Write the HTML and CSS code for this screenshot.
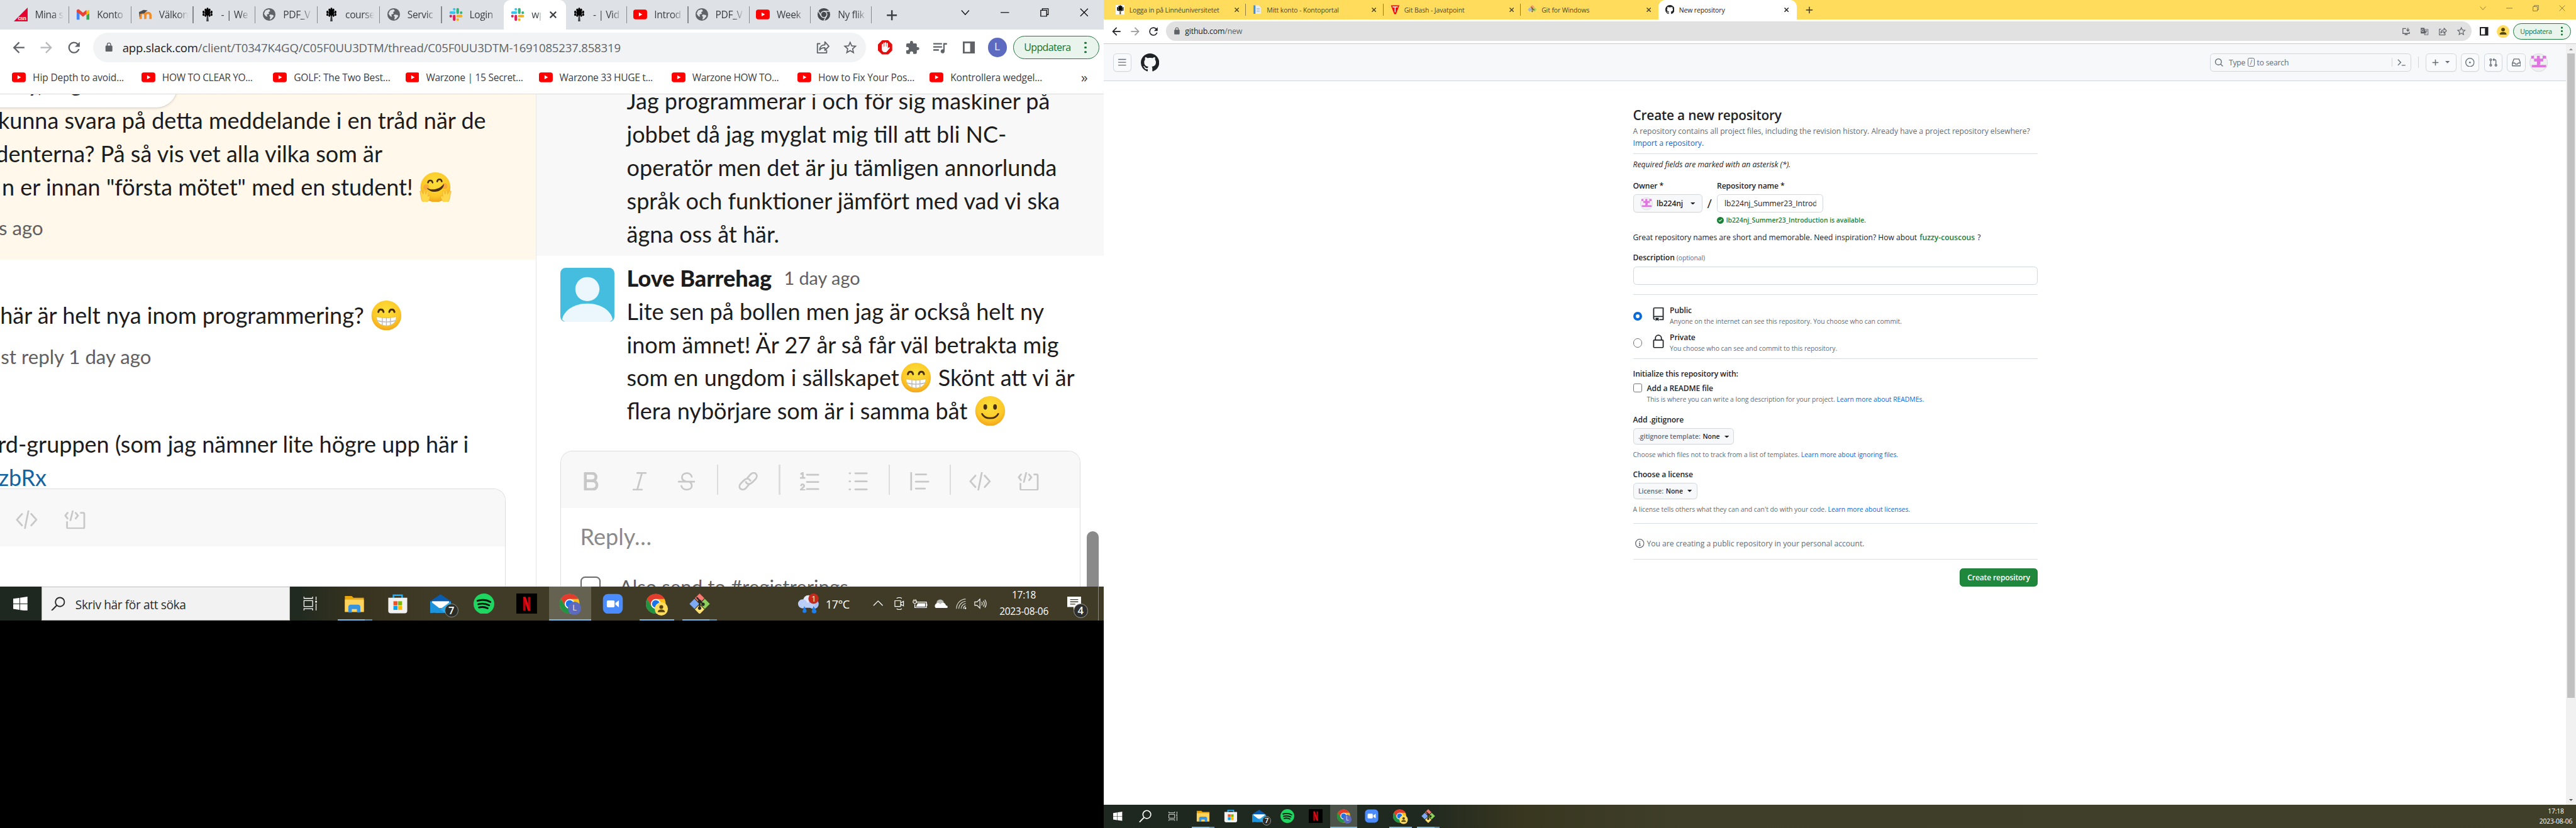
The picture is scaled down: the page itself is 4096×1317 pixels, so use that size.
FILE: index.html
```html
<!DOCTYPE html>
<html lang="sv">
<head>
<meta charset="utf-8">
<title>Desktop</title>
<link rel="stylesheet" href="styles.css">
</head>
<body>
<svg class="defs" aria-hidden="true">
  <symbol id="csn" viewBox="0 0 24 24"><path d="M24 0v24H0z" fill="#e4032e"/><text x="7" y="22" font-size="9" font-weight="700" font-family="Liberation Sans, sans-serif" fill="#fff">csn</text></symbol>
  <symbol id="gmail" viewBox="0 0 24 24"><path d="M1 4v17h5V11z" fill="#4285f4"/><path d="M23 4v17h-5V11z" fill="#34a853"/><path d="M18 6l5-2v6l-5 4z" fill="#fbbc04"/><path d="M1 6c0-3 3-4 5-2l6 5 6-5v7l-6 5-6-5-5-3z" fill="#ea4335"/></symbol>
  <symbol id="moodle" viewBox="0 0 24 24"><path d="M4 20v-7c0-5 7-5 8 0v7m0-7c1-5 9-5 9 0v7" fill="none" stroke="#f28c28" stroke-width="4"/><path d="M1 8l8-4 7 1-6 5-7 1v5H2z" fill="#4d4d4d"/></symbol>
  <symbol id="tree" viewBox="0 0 24 24"><path d="M11 12h2l1 12h-4z"/><g fill="none" stroke="#000" stroke-width="3.2" stroke-linecap="round" stroke-dasharray="1.500 3.300"><path d="M12 2v12M8.500 3.500v11M15.500 3.500v11M5 7v6M19 7v6M10.300 5.500v9M13.700 5.500v9"/></g></symbol>
  <symbol id="globe" viewBox="0 0 24 24"><circle cx="12" cy="12" r="11" fill="#5f6368"/><path d="M5 6c3-3 6-2 7-3l2 3-3 2 1 3-4 1 1 4-3-1-3-4zM14 12l5 1 1 2-4 5-3 1 1-5-2-2z" fill="#dee1e6"/></symbol>
  <symbol id="slack" viewBox="0 0 24 24"><g stroke-width="4.6" stroke-linecap="round"><path d="M9 3v.1M3 9h6" stroke="#36c5f0"/><path d="M15 3v6M21 9v.1" stroke="#2eb67d"/><path d="M15 15h6M15 21v.1" stroke="#ecb22e"/><path d="M9 15v6M3 15v.1" stroke="#e01e5a"/></g></symbol>
  <symbol id="yt" viewBox="0 0 24 24"><rect y="3.5" width="24" height="17" rx="4" fill="#f00"/><path d="M9.7 8.6v6.8l6-3.4z" fill="#fff"/></symbol>
  <symbol id="chromegrey" viewBox="0 0 24 24"><circle cx="12" cy="12" r="11" fill="#474a4e"/><circle cx="12" cy="12" r="5.4" fill="none" stroke="#dee1e6" stroke-width="1.6"/><path d="M12 6.6h10M7.3 14.7L2.4 6.5M16.7 14.7L12 23" stroke="#dee1e6" stroke-width="1.6"/></symbol>
  <symbol id="portal" viewBox="0 0 24 24"><path d="M3 1h13l5 6v16H3z" fill="#e8eef5"/><path d="M2 1h5v22H2z" fill="#3f8fd6"/><path d="M10 9h8M10 13h8M10 17h8" stroke="#9fb4c8" stroke-width="1.6"/></symbol>
  <symbol id="jtp" viewBox="0 0 24 24"><path d="M1 1h22l-9 23h-4z" fill="#f00"/><path d="M5 5h14M12 5v14" stroke="#fff" stroke-width="2.4"/></symbol>
  <symbol id="git" viewBox="0 0 24 24"><path d="M12 0l5.5 5.5L12 11 6.500 5.500z" fill="#f47b73"/><path d="M6 6.200l5.500 5.800L6 17.800.2 12z" fill="#7ea9f5"/><path d="M18 6.200l5.800 5.800-5.800 5.800-5.500-5.800z" fill="#8bd15c"/><path d="M12 13l5.500 5.500L12 24l-5.500-5.500z" fill="#ffe175"/><path d="M8.500 4.500l7.500 8M12 8v8.500" stroke="#2b2a22" stroke-width="1.700"/><circle cx="12" cy="9" r="1.900" fill="#2b2a22"/><circle cx="16" cy="12.500" r="1.900" fill="#2b2a22"/><circle cx="12" cy="17" r="1.900" fill="#2b2a22"/></symbol>
  <symbol id="gh" viewBox="0 0 16 16"><path d="M8 0c4.420 0 8 3.580 8 8a8.013 8.013 0 0 1-5.450 7.590c-.4.080-.55-.17-.55-.38 0-.27.010-1.130.010-2.200 0-.75-.25-1.230-.54-1.480 1.780-.2 3.650-.88 3.650-3.950 0-.88-.31-1.590-.82-2.150.080-.2.360-1.020-.080-2.120 0 0-.67-.22-2.200.82-.64-.18-1.320-.27-2-.27-.68 0-1.360.090-2 .27-1.530-1.030-2.200-.82-2.200-.82-.44 1.100-.16 1.920-.080 2.120-.51.56-.82 1.280-.82 2.150 0 3.060 1.860 3.750 3.640 3.950-.23.2-.44.550-.51 1.070-.46.210-1.610.550-2.330-.66-.15-.24-.6-.83-1.230-.82-.67.010-.27.380.010.530.34.190.73.900.82 1.130.16.450.68 1.310 2.690.94 0 .67.010 1.300.010 1.490 0 .21-.15.450-.55.380A7.995 7.995 0 0 1 0 8c0-4.420 3.580-8 8-8Z"/></symbol>
  <symbol id="back" viewBox="0 0 24 24"><path d="M20 11H7.800l5.600-5.600L12 4l-8 8 8 8 1.400-1.400L7.800 13H20z"/></symbol>
  <symbol id="fwd" viewBox="0 0 24 24"><path d="M4 11h12.200l-5.600-5.600L12 4l8 8-8 8-1.400-1.400 5.600-5.600H4z"/></symbol>
  <symbol id="reload" viewBox="0 0 24 24"><path d="M17.650 6.350A7.960 7.960 0 0 0 12 4a8 8 0 1 0 7.730 10h-2.080A6 6 0 1 1 12 6c1.660 0 3.140.69 4.220 1.780L13 11h7V4z"/></symbol>
  <symbol id="lock" viewBox="0 0 24 24"><path d="M18 8h-1V6A5 5 0 0 0 7 6v2H6a2 2 0 0 0-2 2v10c0 1.100.9 2 2 2h12a2 2 0 0 0 2-2V10a2 2 0 0 0-2-2zM9 6a3 3 0 0 1 6 0v2H9z"/></symbol>
  <symbol id="share" viewBox="0 0 24 24"><path d="M8 6H3v16h16v-5M7 17c0-6 4-9 9-9V3l7 7.500-7 7V13c-4 0-7 1-9 4z" fill="none" stroke="currentColor" stroke-width="2" stroke-linejoin="round"/></symbol>
  <symbol id="star" viewBox="0 0 24 24"><path d="M22 9.240l-7.190-.62L12 2 9.190 8.630 2 9.240l5.460 4.730L5.820 21 12 17.270 18.180 21l-1.630-7.030zM12 15.400l-3.760 2.270 1-4.280-3.320-2.880 4.380-.38L12 6.100l1.710 4.040 4.380.38-3.320 2.880 1 4.280z"/></symbol>
  <symbol id="hand" viewBox="0 0 24 24"><path d="M7 0h10l7 7v10l-7 7H7l-7-7V7z" fill="#e40d0d"/><path d="M6.500 12V7a1 1 0 0 1 2 0v4h.5V5a1 1 0 0 1 2.100 0v5.500h.6V4.200a1 1 0 0 1 2.100 0v6.300h.6V5.500a1 1 0 0 1 2.100 0v8l1.500-1.500c1-1 2.500 0 1.500 1.500L15.500 18c-1 1.500-2 2-4 2-3 0-5-2-5-5z" fill="#fff"/></symbol>
  <symbol id="puzzle" viewBox="0 0 24 24"><path d="M20.500 11H19V7a2 2 0 0 0-2-2h-4V3.500a2.500 2.500 0 0 0-5 0V5H4a2 2 0 0 0-2 2v3.800h1.500a2.700 2.700 0 0 1 0 5.400H2V20c0 1.100.9 2 2 2h3.800v-1.500a2.700 2.700 0 0 1 5.400 0V22H17a2 2 0 0 0 2-2v-4h1.500a2.500 2.500 0 0 0 0-5z"/></symbol>
  <symbol id="queue" viewBox="0 0 24 24"><path d="M15 4.500H1v2.400h14zm0 5H1v2.400h14zM1 16.900h9v-2.400H1zM17 4.500v10.200a3.200 3.200 0 1 0 2.200 3V7H23V4.500z"/></symbol>
  <symbol id="panel" viewBox="0 0 24 24"><path d="M0 0h24v24H0zm3.500 3.500v17h11v-17z" fill-rule="evenodd"/></symbol>
  <symbol id="install" viewBox="0 0 24 24"><path d="M12 4H3v14h18v-5M8 21h8M17 2v9m-4-4l4 4.500L21 7" fill="none" stroke="currentColor" stroke-width="2.300"/></symbol>
  <symbol id="translate" viewBox="0 0 24 24"><path d="M2 2h10l4 16H2z"/><path d="M13 6.500h9.500v15H12l2-3.500M14 11h7m-3.500-2v2c0 3-2 5-3.500 6m1-5c1 3 3 4.500 5 5.500" fill="none" stroke="currentColor" stroke-width="1.600"/><path d="M9.500 7.500A3.200 3.200 0 1 0 10 11H7.500" fill="none" stroke="#e1e1e1" stroke-width="1.500"/></symbol>
  <symbol id="person" viewBox="0 0 24 24"><circle cx="12" cy="12" r="12" fill="#ffdc5c"/><circle cx="12" cy="8.500" r="3.500" fill="#54430a"/><path d="M5.500 18c0-4 3-5 6.500-5s6.500 1 6.500 5z" fill="#54430a"/></symbol>
  <symbol id="x" viewBox="0 0 16 16"><path d="M1 1l14 14M15 1L1 15" stroke="currentColor" fill="none" vector-effect="non-scaling-stroke"/></symbol>
  <symbol id="chev" viewBox="0 0 16 16"><path d="M1 4l7 8 7-8" stroke="currentColor" fill="none" vector-effect="non-scaling-stroke"/></symbol>
  <symbol id="min" viewBox="0 0 16 16"><path d="M0 8h16" stroke="currentColor" vector-effect="non-scaling-stroke"/></symbol>
  <symbol id="restore" viewBox="0 0 16 16"><path d="M1 4h11v11H1zM4 4V1h11v11h-3" stroke="currentColor" fill="none" vector-effect="non-scaling-stroke"/></symbol>
  <symbol id="plus" viewBox="0 0 16 16"><path d="M8 1v14M1 8h14" stroke="currentColor" stroke-width="2.200"/></symbol>

  <radialGradient id="face" cx=".5" cy=".35" r=".65"><stop offset="0" stop-color="#fde13b"/><stop offset=".7" stop-color="#fcc727"/><stop offset="1" stop-color="#f3a41d"/></radialGradient>
  <symbol id="grin" viewBox="0 0 52 52"><circle cx="26" cy="26" r="26" fill="url(#face)"/><path d="M12 20c1-6 8-6 9 0M31 20c1-6 8-6 9 0" fill="none" stroke="#4a2f12" stroke-width="3.200" stroke-linecap="round"/><path d="M9 28c10 3 24 3 34 0 1 9-6 16-17 16S8 37 9 28z" fill="#fff" stroke="#d9b24a" stroke-width=".8"/><path d="M10 35c10 3 22 3 32 0M19 30v13M26 30v14M33 30v13" stroke="#b9b9b9" stroke-width="1.500" fill="none"/></symbol>
  <symbol id="smile" viewBox="0 0 52 52"><circle cx="26" cy="26" r="26" fill="url(#face)"/><ellipse cx="17.500" cy="19" rx="3.200" ry="4.800" fill="#4a2f12"/><ellipse cx="34.500" cy="19" rx="3.200" ry="4.800" fill="#4a2f12"/><path d="M12 31c5 10 23 10 28 0" fill="none" stroke="#4a2f12" stroke-width="3" stroke-linecap="round"/></symbol>
  <symbol id="hug" viewBox="0 0 56 52"><circle cx="28" cy="26" r="26" fill="url(#face)"/><circle cx="12" cy="26" r="5" fill="#f58a4b" opacity=".5"/><circle cx="44" cy="24" r="5" fill="#f58a4b" opacity=".5"/><path d="M15 18c1-5 7-5 8 0M31 16c1-5 7-5 8 0" fill="none" stroke="#4a2f12" stroke-width="2.800" stroke-linecap="round"/><path d="M13 27c8 5 21 4 30-7-1 16-24 18-30 7z" fill="#4a2f12"/><path d="M2 38l-1-5 2-1 4 6 0-7 2 0 2 7 3-6 2 1-1 9 3-2c2 3-1 12-8 13C4 53 3 45 2 38zM54 38l1-5-2-1-4 6 0-7-2 0-2 7-3-6-2 1 1 9-3-2c-2 3 1 12 8 13 6 0 7-8 8-15z" fill="#ffd84a" stroke="#f2a93b" stroke-width=".8"/></symbol>

  <symbol id="code" viewBox="0 0 38 32"><path d="M11 6L2 16l9 10M27 6l9 10-9 10M22 1l-6 30" class="ln"/></symbol>
  <symbol id="codeblock" viewBox="0 0 38 32"><path d="M6 4L2 9l4 5M20 4l4 5-4 5M15 1l-4 16M5 20v9q0 2 2 2h26q2 0 2-2V6q0-2-2-2h-4" class="ln"/></symbol>
  <symbol id="bold" viewBox="0 0 26 32"><path d="M3 2h11c10 0 10 13 0 13H3zM3 15h12c11 0 11 15 0 15H3z" class="ln bd"/></symbol>
  <symbol id="ital" viewBox="0 0 24 32"><path d="M8 1.500h15M1 30.500h15M16 2L8 30" class="ln"/></symbol>
  <symbol id="strike" viewBox="0 0 30 32"><path d="M1 16.500h28M24 8C22-1 7 0 7 9c0 4 3 6 6 7M6 24c2 9 18 8 18 0 0-4-2-6-4-7" class="ln"/></symbol>
  <symbol id="link" viewBox="0 0 34 32"><path d="M15 11l6-7c7-7 15 1 9 8l-6 6c-4 4-9 3-11-1M19 21l-6 7C6 34-2 27 4 20l6-6c4-4 9-3 11 1" class="ln"/></symbol>
  <symbol id="ol" viewBox="0 0 34 32"><path d="M12 4.500h20M12 17h20M12 29.500h20M2 3l3-2v9M1 10h7M2 23c2-4 6-1 5 2l-6 6h7" class="ln"/></symbol>
  <symbol id="ul" viewBox="0 0 34 32"><path d="M12 2h20M12 16h20M12 30h20M2 2h1M2 16h1M2 30h1" class="ln"/></symbol>
  <symbol id="quote" viewBox="0 0 34 32"><path d="M2 1v30M10 4h18M10 16.500h22M10 28.500h16" class="ln"/></symbol>

  <symbol id="win" viewBox="0 0 24 24"><path d="M0 3.500l10.500-1.500v9.500H0zM11.500 1.800L24 0v11.500H11.500zM0 12.500h10.500V22L0 20.500zM11.500 12.500H24V24l-12.500-1.800z" fill="#fff"/></symbol>
  <symbol id="mag" viewBox="0 0 24 24"><circle cx="15" cy="9" r="7.500" fill="none" stroke="currentColor" stroke-width="2"/><path d="M9.800 14.500L1 23.500" stroke="currentColor" stroke-width="2.200"/></symbol>
  <symbol id="tview" viewBox="0 0 24 24"><path d="M1 0v3h15V0M1 7h15v10H1zM1 24v-3h15v3M22 0v6M22 12v12" fill="none" stroke="#fff" stroke-width="1.400"/><path d="M20.500 7.500h3v3h-3z" fill="#fff"/></symbol>
  <symbol id="expl" viewBox="0 0 24 24"><path d="M1 4.500V3h8l2 2h12v16H1z" fill="#e8a50d"/><path d="M1 7h22v14.500H1z" fill="#ffd35c"/><path d="M5 22v-6c0-2 1-3 3-3h8c2 0 3 1 3 3v6h-4v-4H9v4z" fill="#3a93dd"/></symbol>
  <symbol id="store" viewBox="0 0 24 24"><path d="M7 6V2h10v4" fill="none" stroke="#29abf0" stroke-width="1.800"/><path d="M1 5h22v15q0 3-3 3H4q-3 0-3-3z" fill="#f1f1f1"/><path d="M7 9h4.700v4.700H7z" fill="#f25022"/><path d="M12.300 9H17v4.700h-4.700z" fill="#7fba00"/><path d="M7 14.300h4.700V19H7z" fill="#00a4ef"/><path d="M12.300 14.300H17V19h-4.700z" fill="#ffb900"/></symbol>
  <symbol id="mail" viewBox="0 0 24 24"><path d="M0 9l12-8 12 8v12H0z" fill="#0a5cae"/><path d="M2 9h20v8H2z" fill="#fff"/><path d="M0 9l12 9-10 4.500H0zM24 9L6 22.500h18z" fill="#2ea9ea"/><path d="M0 9l17 13.500H0z" fill="#1b93dd"/></symbol>
  <symbol id="spot" viewBox="0 0 24 24"><circle cx="12" cy="12" r="12" fill="#1ed760"/><path d="M4.500 8.500c5-1.500 11-1 15 1.300M5.500 12.500c4-1.200 9-.7 12.500 1.200M6.300 16.200c3.500-1 7-.6 10 1" fill="none" stroke="#10150f" stroke-width="2.100" stroke-linecap="round"/></symbol>
  <symbol id="netf" viewBox="0 0 24 24"><path d="M0 0h24v24H0z" fill="#000"/><path d="M8 4h2.800v16H8zM13.500 4h2.800v16h-2.800z" fill="#b1060f"/><path d="M8 4h2.800l5.500 16h-2.800z" fill="#e50914"/></symbol>
  <symbol id="chrome" viewBox="0 0 24 24"><circle cx="11.500" cy="12" r="11.500" fill="#fbc116"/><path d="M1.500 6.200A11.500 11.500 0 0 1 21.500 6.300H11.500L6.500 15z" fill="#e33b2e"/><path d="M1.500 6.200A11.500 11.500 0 0 0 11.500 23.500l5-8.700-5 2.800L6.500 15z" fill="#229342"/><circle cx="11.500" cy="12" r="5.700" fill="#fff"/><circle cx="11.500" cy="12" r="4.400" fill="#1a73e8"/></symbol>
  <symbol id="zoomapp" viewBox="0 0 24 24"><rect x=".5" y=".5" width="23" height="23" rx="6" fill="#4a8cff"/><rect x="5" y="8" width="9" height="8" rx="1.500" fill="#fff"/><path d="M15 11l4-3v8l-4-3z" fill="#fff"/></symbol>
  <symbol id="weather" viewBox="0 0 38 36"><circle cx="19" cy="12" r="9" fill="#dfe8fb"/><circle cx="9" cy="18" r="8" fill="#b9cdf6"/><circle cx="28" cy="18" r="9" fill="#a9c2f4"/><path d="M8 16h22v9H8z" fill="#bccff6"/><path d="M12 22l4 8c0 5-8 5-7 0zM28 22l5 8c1 6-9 6-8 0z" fill="#1b7ff0"/><circle cx="28" cy="9" r="9" fill="#c42b1c"/></symbol>
  <symbol id="meet" viewBox="0 0 18 22"><path d="M1 6h10v10H1zM11 10l5-3v8l-5-3M4 2q5-3 9 0M4 20q5 3 9 0" fill="none" stroke="#fff" stroke-width="1.300"/></symbol>
  <symbol id="batt" viewBox="0 0 26 16"><path d="M6 5h18v10H4V9M25 8v4" fill="none" stroke="#fff" stroke-width="1.500"/><path d="M9 7h13v6H6z" fill="#fff"/><path d="M1 3h6v3q-3 3-6 0zM2.500 0v3M5.500 0v3" stroke="#fff" fill="none" stroke-width="1.200"/></symbol>
  <symbol id="cloud" viewBox="0 0 26 16"><circle cx="12" cy="7" r="6.500" fill="#b9b9b3"/><path d="M5 16a5 5 0 0 1 1-9c3-1 5 0 6 2 2-4 9-4 10 2 4 0 4 5 0 5z" fill="#fff"/></symbol>
  <symbol id="wifi" viewBox="0 0 20 20"><path d="M2 19C2 9 10 2 18 2M6 19c0-7 6-13 12-13M10 19c0-5 4-9 8-9" fill="none" stroke="#d8d8d0" stroke-width="1.300"/><path d="M14 19c0-3 2-5 4-5" fill="none" stroke="#fff" stroke-width="1.300"/><circle cx="17.500" cy="18" r="1.500" fill="#fff"/></symbol>
  <symbol id="sound" viewBox="0 0 22 20"><path d="M1 7h4l5-5v16l-5-5H1zM13 7q2 3 0 6M16 5q3.500 5 0 10M18.500 3q5 7 0 14" fill="none" stroke="#fff" stroke-width="1.200"/></symbol>
  <symbol id="note" viewBox="0 0 24 24"><path d="M0 0h24v18h-8l-5 5v-5H0z" fill="#fff"/><path d="M5 5h14M5 9h14M5 13h9" stroke="#3f3b27" stroke-width="1.500"/></symbol>

  <symbol id="oct-search" viewBox="0 0 16 16"><path d="M10.680 11.740a6 6 0 0 1-7.922-8.982 6 6 0 0 1 8.982 7.922l3.040 3.040a.749.749 0 1 1-1.060 1.060ZM11.500 7a4.499 4.499 0 1 0-8.997 0A4.499 4.499 0 0 0 11.500 7Z"/></symbol>
  <symbol id="oct-bars" viewBox="0 0 16 16"><path d="M1 2.750A.75.750 0 0 1 1.750 2h12.500a.75.750 0 0 1 0 1.500H1.750A.75.750 0 0 1 1 2.750Zm0 5A.75.750 0 0 1 1.750 7h12.500a.75.750 0 0 1 0 1.500H1.750A.75.750 0 0 1 1 7.750ZM1.750 12h12.500a.75.750 0 0 1 0 1.500H1.750a.75.750 0 0 1 0-1.500Z"/></symbol>
  <symbol id="oct-term" viewBox="0 0 16 16"><path d="M2 3l5 5-5 5M8.500 13H15" fill="none" stroke="currentColor" stroke-width="1.500"/></symbol>
  <symbol id="oct-issue" viewBox="0 0 16 16"><circle cx="8" cy="8" r="7.250" fill="none" stroke="currentColor" stroke-width="1.500"/><circle cx="8" cy="8" r="1.500"/></symbol>
  <symbol id="oct-pr" viewBox="0 0 16 16"><path d="M1.500 3.250a2.250 2.250 0 1 1 3 2.122v5.256a2.251 2.251 0 1 1-1.500 0V5.372A2.250 2.250 0 0 1 1.500 3.250Zm5.677-.177L9.573.677A.25.250 0 0 1 10 .854V2.500h1A2.500 2.500 0 0 1 13.500 5v5.628a2.251 2.251 0 1 1-1.500 0V5a1 1 0 0 0-1-1h-1v1.646a.25.250 0 0 1-.427.177L7.177 3.427a.25.250 0 0 1 0-.354ZM3.750 2.500a.75.750 0 1 0 0 1.500.75.750 0 0 0 0-1.500Zm0 9.500a.75.750 0 1 0 0 1.500.75.750 0 0 0 0-1.500Zm8.250.75a.75.750 0 1 0 1.500 0 .75.750 0 0 0-1.500 0Z"/></symbol>
  <symbol id="oct-inbox" viewBox="0 0 16 16"><path d="M3.700 2h8.600l2.900 7.500V13q0 1-1 1H1.800q-1 0-1-1V9.500zM1 9h4l1.300 2h3.400L11 9h4" fill="none" stroke="currentColor" stroke-width="1.500" stroke-linejoin="round"/></symbol>
  <symbol id="caret" viewBox="0 0 8 4"><path d="M0 0h8L4 4z"/></symbol>
  <symbol id="oct-check" viewBox="0 0 16 16"><path d="M8 16A8 8 0 1 1 8 0a8 8 0 0 1 0 16Zm3.780-9.720a.751.751 0 0 0-1.060-1.060L6.750 9.190 5.280 7.720a.751.751 0 0 0-1.060 1.060l2 2a.75.750 0 0 0 1.060 0Z"/></symbol>
  <symbol id="oct-repo" viewBox="0 0 24 24"><path stroke="currentColor" stroke-width=".4" d="M3 2.750A2.750 2.750 0 0 1 5.750 0h14.500a.75.750 0 0 1 .75.750v20.500a.75.750 0 0 1-.75.750h-6a.75.750 0 0 1 0-1.500h5.250v-4H6A1.500 1.500 0 0 0 4.500 18v.75c0 .716.430 1.334 1.050 1.605a.75.750 0 0 1-.6 1.374A3.251 3.251 0 0 1 3 18.750ZM19.500 1.500H5.750c-.69 0-1.250.56-1.250 1.250v12.651A2.989 2.989 0 0 1 6 15h13.500Z"/><path d="M7 18.250a.25.250 0 0 1 .25-.25h5a.25.250 0 0 1 .25.250v5.010a.25.250 0 0 1-.397.201l-2.206-1.604a.25.250 0 0 0-.294 0L7.397 23.460a.25.250 0 0 1-.397-.2v-5.010Z"/></symbol>
  <symbol id="oct-lock" viewBox="0 0 24 24"><path d="M4.700 9.700h14.600q1 0 1 1v11q0 1-1 1H4.700q-1 0-1-1v-11q0-1 1-1zM6.800 9.500V6.500a5.200 5.200 0 0 1 10.400 0v3" fill="none" stroke="currentColor" stroke-width="1.900"/></symbol>
  <symbol id="oct-info" viewBox="0 0 16 16"><circle cx="8" cy="8" r="7.250" fill="none" stroke="currentColor" stroke-width="1.500"/><path d="M6.500 7.750H8.200v3.500M6.500 11.500h3" fill="none" stroke="currentColor" stroke-width="1.400"/><circle cx="8" cy="5" r="1"/></symbol>
  <symbol id="ident" viewBox="0 0 32 32"><circle cx="16" cy="16" r="15.500" fill="#f0f0f0" stroke="#d0d7de"/><path d="M3 4h5v5H3zM13 4h5v5h5V4h5v5h-4v5h-5v5h-1v1h11v4H4v-4h9v-6H8v-5h5zM24 4h5v5h-5z" fill="#e074e0"/></symbol>
</svg>

<main class="desktop">

  <section class="screen left">
    <header class="tabs">
      <div class="tab"><svg><use href="#csn"/></svg><span>Mina s</span></div>
      <div class="tab"><svg><use href="#gmail"/></svg><span>Konto</span></div>
      <div class="tab"><svg><use href="#moodle"/></svg><span>Välkon</span></div>
      <div class="tab"><svg><use href="#tree"/></svg><span>- | We</span></div>
      <div class="tab"><svg><use href="#globe"/></svg><span>PDF_V</span></div>
      <div class="tab"><svg><use href="#tree"/></svg><span>course</span></div>
      <div class="tab"><svg><use href="#globe"/></svg><span>Servic</span></div>
      <div class="tab last"><svg><use href="#slack"/></svg><span>Login</span></div>
      <div class="tab active"><svg><use href="#slack"/></svg><span>wp</span><svg class="close"><use href="#x"/></svg></div>
      <div class="tab b"><svg><use href="#tree"/></svg><span>- | Vid</span></div>
      <div class="tab b"><svg><use href="#yt"/></svg><span>Introd</span></div>
      <div class="tab b"><svg><use href="#globe"/></svg><span>PDF_V</span></div>
      <div class="tab b"><svg><use href="#yt"/></svg><span>Week</span></div>
      <div class="tab b"><svg><use href="#chromegrey"/></svg><span>Ny flik</span></div>
      <svg class="newtab"><use href="#plus"/></svg>
      <div class="winctl"><svg><use href="#chev"/></svg><svg><use href="#min"/></svg><svg><use href="#restore"/></svg><svg><use href="#x"/></svg></div>
    </header>
    <div class="toolbar">
      <svg class="nav"><use href="#back"/></svg><svg class="nav dim"><use href="#fwd"/></svg><svg class="nav"><use href="#reload"/></svg>
      <div class="url"><svg class="lock"><use href="#lock"/></svg><p><b>app.slack.com</b>/client/T0347K4GQ/C05F0UU3DTM/thread/C05F0UU3DTM-1691085237.858319</p><svg class="u1"><use href="#share"/></svg><svg class="u2"><use href="#star"/></svg></div>
      <svg class="t1"><use href="#hand"/></svg><svg class="t2"><use href="#puzzle"/></svg><svg class="t3"><use href="#queue"/></svg><svg class="t4"><use href="#panel"/></svg>
      <span class="me">L</span>
      <span class="update"><span>Uppdatera</span><i class="dots"></i></span>
    </div>
    <nav class="marks">
      <a class="m1"><svg><use href="#yt"/></svg>Hip Depth to avoid...</a>
      <a class="m2"><svg><use href="#yt"/></svg>HOW TO CLEAR YO...</a>
      <a class="m3"><svg><use href="#yt"/></svg>GOLF: The Two Best...</a>
      <a class="m4"><svg><use href="#yt"/></svg>Warzone | 15 Secret...</a>
      <a class="m5"><svg><use href="#yt"/></svg>Warzone 33 HUGE t...</a>
      <a class="m6"><svg><use href="#yt"/></svg>Warzone HOW TO...</a>
      <a class="m7"><svg><use href="#yt"/></svg>How to Fix Your Pos...</a>
      <a class="m8"><svg><use href="#yt"/></svg>Kontrollera wedgel...</a>
      <span class="more">»</span>
    </nav>
    <div class="slack">
      <div class="channel">
        <div class="datepill">Friday, August 4th</div>
        <div class="feed">
          <article class="cream">
            <p class="line e1">kunna svara på detta meddelande i en tråd när de</p>
            <p class="line e2">denterna? På så vis vet alla vilka som är</p>
            <p class="line e3">n er innan "första mötet" med en student! <svg class="emo"><use href="#hug"/></svg></p>
            <p class="meta e4">s ago</p>
          </article>
          <p class="line e5">här är helt nya inom programmering?<svg class="emo gap"><use href="#grin"/></svg></p>
          <p class="meta e6">ast reply 1 day ago</p>
          <p class="line e7">rd-gruppen (som jag nämner lite högre upp här i</p>
          <p class="line e8"><a>zbRx</a></p>
        </div>
        <div class="composer cut"><div class="tools"><svg><use href="#code"/></svg><svg><use href="#codeblock"/></svg></div></div>
      </div>
      <div class="thread">
        <article class="grey">
          <p class="line">Jag programmerar i och för sig maskiner på</p>
          <p class="line">jobbet då jag myglat mig till att bli NC-</p>
          <p class="line">operatör men det är ju tämligen annorlunda</p>
          <p class="line">språk och funktioner jämfört med vad vi ska</p>
          <p class="line">ägna oss åt här.</p>
        </article>
        <article class="reply">
          <svg class="avatar" viewBox="0 0 94 94"><rect width="94" height="94" rx="9" fill="#44bddf"/><circle cx="47" cy="37" r="21" fill="#ebf7fc"/><path d="M3 90C6 74 24 62 47 62s41 12 44 28l-5 4H8z" fill="#ebf7fc"/></svg>
          <div>
            <p class="line"><b>Love Barrehag</b><time>1 day ago</time></p>
            <p class="line">Lite sen på bollen men jag är också helt ny</p>
            <p class="line">inom ämnet! Är 27 år så får väl betrakta mig</p>
            <p class="line">som en ungdom i sällskapet<svg class="emo"><use href="#grin"/></svg> Skönt att vi är</p>
            <p class="line">flera nybörjare som är i samma båt <svg class="emo"><use href="#smile"/></svg></p>
          </div>
        </article>
        <div class="composer">
          <div class="tools">
            <svg class="c1"><use href="#bold"/></svg><svg class="c2"><use href="#ital"/></svg><svg class="c3"><use href="#strike"/></svg><i class="s1"></i>
            <svg class="c4"><use href="#link"/></svg><i class="s2"></i><svg class="c5"><use href="#ol"/></svg><svg class="c6"><use href="#ul"/></svg><i class="s3"></i>
            <svg class="c7"><use href="#quote"/></svg><i class="s4"></i><svg class="c8"><use href="#code"/></svg><svg class="c9"><use href="#codeblock"/></svg>
          </div>
          <p class="ph">Reply…</p>
          <p class="also"><i></i>Also send to #registrerings</p>
        </div>
        <div class="thumb"></div>
      </div>
    </div>
    <footer class="taskbar">
      <svg class="start"><use href="#win"/></svg>
      <div class="search"><svg><use href="#mag"/></svg>Skriv här för att söka</div>
      <svg class="tv"><use href="#tview"/></svg>
      <div class="apps">
        <span class="run two"><svg><use href="#expl"/></svg></span><span><svg><use href="#store"/></svg></span><span><svg><use href="#mail"/></svg><em class="n">7</em></span><span><svg><use href="#spot"/></svg></span><span><svg><use href="#netf"/></svg></span><span class="on"><svg><use href="#chrome"/></svg><em class="l">L</em></span><span><svg><use href="#zoomapp"/></svg></span><span class="run"><svg><use href="#chrome"/></svg><svg class="p"><use href="#person"/></svg></span><span class="run two"><svg><use href="#git"/></svg></span>
      </div>
      <div class="weather"><svg><use href="#weather"/></svg><em>1</em><span>17°C</span></div>
      <div class="tray"><svg class="r0" viewBox="0 0 18 10"><path d="M1 9l8-8 8 8" fill="none" stroke="#fff" stroke-width="1.400"/></svg><svg class="r1"><use href="#meet"/></svg><svg class="r2"><use href="#batt"/></svg><svg class="r3"><use href="#cloud"/></svg><svg class="r4"><use href="#wifi"/></svg><svg class="r5"><use href="#sound"/></svg></div>
      <div class="clock"><span>17:18</span><span>2023-08-06</span></div>
      <div class="notes"><svg><use href="#note"/></svg><em>4</em></div>
    </footer>
  </section>

  <section class="screen right">
    <header class="tabs">
      <div class="tab"><svg class="wb"><use href="#tree"/></svg><span>Logga in på Linnéuniversitetet</span><svg class="close"><use href="#x"/></svg></div>
      <div class="tab"><svg><use href="#portal"/></svg><span>Mitt konto - Kontoportal</span><svg class="close"><use href="#x"/></svg></div>
      <div class="tab"><svg><use href="#jtp"/></svg><span>Git Bash - Javatpoint</span><svg class="close"><use href="#x"/></svg></div>
      <div class="tab last"><svg class="pale"><use href="#git"/></svg><span>Git for Windows</span><svg class="close"><use href="#x"/></svg></div>
      <div class="tab active"><svg><use href="#gh"/></svg><span>New repository</span><svg class="close"><use href="#x"/></svg></div>
      <svg class="newtab"><use href="#plus"/></svg>
      <div class="winctl"><svg><use href="#chev"/></svg><svg><use href="#min"/></svg><svg><use href="#restore"/></svg><svg><use href="#x"/></svg></div>
    </header>
    <div class="toolbar">
      <svg class="nav"><use href="#back"/></svg><svg class="nav dim"><use href="#fwd"/></svg><svg class="nav"><use href="#reload"/></svg>
      <div class="url"><svg class="lock"><use href="#lock"/></svg><p><b>github.com</b>/new</p><div class="acts"><svg><use href="#install"/></svg><svg><use href="#translate"/></svg><svg><use href="#share"/></svg><svg class="st"><use href="#star"/></svg></div></div>
      <svg class="t4"><use href="#panel"/></svg><svg class="who"><use href="#person"/></svg>
      <span class="update"><span>Uppdatera</span><i class="dots"></i></span>
    </div>
    <div class="page">
      <div class="github">
        <header class="ghead">
          <span class="btn sq"><svg><use href="#oct-bars"/></svg></span>
          <svg class="logo"><use href="#gh"/></svg>
          <div class="gsearch"><svg><use href="#oct-search"/></svg><span>Type</span><kbd>/</kbd><span>to search</span><i></i><svg class="term"><use href="#oct-term"/></svg></div>
          <i class="vr"></i>
          <span class="btn wide"><svg class="pl"><use href="#plus"/></svg><svg class="ct"><use href="#caret"/></svg></span>
          <span class="btn sq"><svg><use href="#oct-issue"/></svg></span>
          <span class="btn sq"><svg><use href="#oct-pr"/></svg></span>
          <span class="btn sq"><svg><use href="#oct-inbox"/></svg></span>
          <svg class="pic"><use href="#ident"/></svg>
        </header>
        <form class="form">
          <h1>Create a new repository</h1>
          <p class="t mute">A repository contains all project files, including the revision history. Already have a project repository elsewhere?<br><a>Import a repository.</a></p>
          <hr class="m7">
          <p class="t it">Required fields are marked with an asterisk (*).</p>
          <div class="own">
            <div class="col1"><p class="t sb">Owner *</p><span class="sel"><svg><use href="#ident"/></svg><b>lb224nj</b><svg class="ct"><use href="#caret"/></svg></span></div>
            <span class="slash">/</span>
            <div class="col2"><p class="t sb">Repository name *</p><span class="inp"><span>lb224nj_Summer23_Introduction</span></span><p class="ok"><svg><use href="#oct-check"/></svg>lb224nj_Summer23_Introduction is available.</p></div>
          </div>
          <p class="t great">Great repository names are short and memorable. Need inspiration? How about <b>fuzzy-couscous</b> ?</p>
          <p class="t sb desc">Description <small>(optional)</small></p>
          <span class="inp full"></span>
          <hr class="m16">
          <div class="vis v1"><i class="radio on"></i><svg><use href="#oct-repo"/></svg><div><p class="t sb">Public</p><p class="s">Anyone on the internet can see this repository. You choose who can commit.</p></div></div>
          <div class="vis v2"><i class="radio"></i><svg><use href="#oct-lock"/></svg><div><p class="t sb">Private</p><p class="s">You choose who can see and commit to this repository.</p></div></div>
          <hr class="m8">
          <p class="t sb g16">Initialize this repository with:</p>
          <div class="readme"><i class="box"></i><div><p class="t sb">Add a README file</p><p class="s">This is where you can write a long description for your project. <a>Learn more about READMEs.</a></p></div></div>
          <p class="t sb g16">Add .gitignore</p>
          <span class="drop"><span>.gitignore template:</span> None<svg><use href="#caret"/></svg></span>
          <p class="s g9">Choose which files not to track from a list of templates. <a>Learn more about ignoring files.</a></p>
          <p class="t sb g15">Choose a license</p>
          <span class="drop"><span>License:</span> None<svg><use href="#caret"/></svg></span>
          <p class="s g9">A license tells others what they can and can't do with your code. <a>Learn more about licenses.</a></p>
          <hr class="m15">
          <p class="t mute info"><svg><use href="#oct-info"/></svg>You are creating a public repository in your personal account.</p>
          <hr class="m16">
          <span class="create">Create repository</span>
        </form>
      </div>
      <div class="scroll"><i class="up"></i><i class="bar"></i><i class="down"></i></div>
    </div>
    <footer class="taskbar">
      <svg class="start"><use href="#win"/></svg><svg class="sm"><use href="#mag"/></svg><svg class="tv"><use href="#tview"/></svg>
      <div class="apps">
        <span class="run two"><svg><use href="#expl"/></svg></span><span><svg><use href="#store"/></svg></span><span><svg><use href="#mail"/></svg><em class="n">7</em></span><span><svg><use href="#spot"/></svg></span><span><svg><use href="#netf"/></svg></span><span class="on"><svg><use href="#chrome"/></svg><em class="l">L</em></span><span><svg><use href="#zoomapp"/></svg></span><span class="run"><svg><use href="#chrome"/></svg><svg class="p"><use href="#person"/></svg></span><span class="run two"><svg><use href="#git"/></svg></span>
      </div>
      <div class="clock"><span>17:18</span><span>2023-08-06</span></div>
    </footer>
  </section>
</main>
</body>
</html>
```
FILE: styles.css
```css
* { box-sizing: border-box; }
html, body { margin: 0; background: #000; overflow: hidden; }
p, h1 { margin: 0; font-weight: 400; }
i, em { font-style: normal; }
svg { display: block; flex: none; fill: currentColor; }
.defs { position: absolute; width: 0; height: 0; }
.ln { fill: none; stroke: #c8c8c8; stroke-width: 3; stroke-linecap: round; stroke-linejoin: round; }
.ln.bd { stroke-width: 5; }

/* two monitors side by side: 1920x1080 and 2560x1440 */
.desktop { zoom: 0.9142857; display: flex; align-items: flex-start; width: 4480px; height: 1441px; background: #000; font-family: "Open Sans", "Noto Sans", sans-serif; }
.screen { flex: none; display: flex; flex-direction: column; overflow: hidden; background: #fff; }
.left { width: 1920px; height: 1080px; }
.right { width: 2560px; height: 1440px; }

/* browser tab strips */
.tabs { display: flex; flex: none; color: #3c4043; white-space: nowrap; }
.tab { flex: none; display: flex; align-items: center; }
.tab span { overflow: hidden; -webkit-mask-image: linear-gradient(90deg, #000 65%, transparent); }
.left .tabs { height: 51px; background: #dee1e6; padding-left: 12.600px; font-size: 17px; letter-spacing: -0.4px; }
.left .tab { width: 108px; padding-left: 12px; position: relative; }
.left .tab.b { width: 106.400px; padding-left: 11px; }
.left .tab > svg { width: 24px; height: 24px; margin-right: 12px; }
.left .tab span { width: 50px; }
.left .tab::after { content: ""; width: 1.500px; height: 30px; background: #86898d; margin-left: auto; }
.left .tab.last::after, .left .tab.active::after, .right .tab.last::after, .right .tab.active::after { display: none; }
.tab.active { background: #fff; border-radius: 12px 12px 0 0; }
.left .tab.active span { width: 17px; }
.left .tab.active .close { width: 12px; height: 12px; margin: 0 0 0 14px; stroke-width: 2.500px; }
.left .newtab { width: 20px; height: 20px; margin: 16px 0 0 25px; }
.winctl { display: flex; margin-left: auto; color: #111; }
.left .winctl { gap: 54px; padding: 14px 27px 0 0; stroke-width: 1.500px; }
.left .winctl svg { width: 15px; height: 15px; }

.right .tabs { height: 34px; background: #ffdc5c; padding-left: 8px; font-size: 11.400px; color: #4f4728; }
.right .tab { width: 239px; padding-left: 12px; }
.right .tab > svg { width: 16px; height: 16px; margin-right: 8px; }
.right .tab .wb { background: #fff; }
.right .tab .pale { opacity: .7; }
.right .tab span { width: 178px; letter-spacing: -0.1px; -webkit-mask-image: none; }
.right .tab .close { width: 8px; height: 8px; margin: 0 0 0 5px; stroke-width: 1.600px; }
.right .tab::after { content: ""; width: 1px; height: 20px; background: #8a7a3c; margin-left: auto; }
.right .tab.active { color: #202124; width: 241px; }
.right .newtab { width: 13px; height: 13px; margin: 11px 0 0 15px; }
.right .winctl { gap: 35px; padding: 9px 18px 0 0; color: #8a7634; }
.right .winctl svg { width: 11px; height: 11px; }

/* toolbars */
.toolbar { flex: none; display: flex; align-items: center; color: #5f6368; background: #fff; }
.toolbar .dim { opacity: .45; }
.url { display: flex; align-items: center; flex: none; }
.url b { font-weight: 400; color: #202124; }
.url p { white-space: nowrap; }
.left .toolbar { height: 63px; padding-left: 18px; }
.left .nav { width: 30px; height: 30px; margin-right: 18px; }
.left .url { width: 1344px; height: 51px; border-radius: 26px; background: #f1f3f4; padding-left: 19px; font-size: 20.300px; }
.left .lock { width: 18px; height: 18px; margin-right: 14px; }
.left .url p { width: 1206px; letter-spacing: -0.19px; }
.left .u1 { width: 24px; height: 24px; margin-right: 22px; }
.left .u2 { width: 28px; height: 28px; }
.left .t1 { width: 25px; height: 25px; margin-left: 21px; }
.left .t2 { width: 26px; height: 26px; margin-left: 22px; }
.left .t3 { width: 26px; height: 26px; margin-left: 22px; }
.left .t4 { width: 21px; height: 21px; margin-left: 27px; }
.me { width: 33px; height: 33px; border-radius: 50%; background: #5c6bc0; color: #e8eaf6; font: 18px/33px Roboto, sans-serif; text-align: center; margin-left: 22px; }
.update { display: flex; align-items: center; color: #137333; background: #e9f4ed; border: 2px solid #1c7a3c; }
.left .update { width: 150px; height: 41px; border-radius: 21px; margin-left: 11px; padding-left: 18px; font-size: 17.500px; letter-spacing: -0.7px; }
.left .update span { width: 105px; }
.dots { width: 4px; height: 4px; border-radius: 50%; background: currentColor; }
.left .dots { box-shadow: 0 -8px, 0 8px; }

.right .toolbar { height: 43px; padding: 0 0 1px 11px; color: #202124; border-bottom: 1px solid #c9cdc9; }
.right .nav { width: 22px; height: 22px; margin-right: 10px; }
.right .url { width: 2271px; height: 34px; border-radius: 17px; background: #e1e1e1; padding: 0 9px 0 12px; font-size: 13.500px; color: #5f6368; margin-left: 1px; }
.right .lock { width: 14px; height: 14px; margin-right: 7px; }
.right .url p { letter-spacing: -0.2px; }
.acts { display: flex; align-items: center; gap: 17px; margin-left: auto; }
.acts svg { width: 15px; height: 15px; }
.acts .st { width: 19px; height: 19px; margin-left: -2px; }
.right .t4 { width: 15px; height: 15px; margin-left: 14px; }
.who { width: 22px; height: 22px; margin-left: 14px; }
.right .update { width: 100px; height: 28px; border-radius: 14px; margin-left: 7px; padding-left: 11px; font-size: 11.700px; letter-spacing: -0.4px; border-width: 1.500px; }
.right .update span { width: 71px; }
.right .dots { width: 3px; height: 3px; box-shadow: 0 -6px, 0 6px; }

/* bookmarks */
.marks { flex: none; height: 50px; display: flex; align-items: center; padding: 0 0 8px 21px; border-bottom: 2px solid #dadce0; font-size: 17px; letter-spacing: -0.15px; color: #3c4043; white-space: nowrap; }
.marks a { display: flex; align-items: center; gap: 12px; flex: none; }
.marks svg { width: 24px; height: 24px; }
.m1 { width: 225px; } .m2 { width: 229px; letter-spacing: -0.35px; } .m3 { width: 230px; } .m4 { width: 232px; letter-spacing: -0.3px; }
.m5 { width: 231px; letter-spacing: -0.35px; } .m6 { width: 219px; letter-spacing: -0.35px; } .m7 { width: 230px; } .m8 { width: 263px; }
.more { font-size: 24px; line-height: 24px; }

/* slack */
.slack { flex: 1; display: flex; min-height: 0; font-family: Lato, sans-serif; color: #1d1c1d; }
.line { display: flex; align-items: center; height: 57.750px; font-size: 39.375px; line-height: 57.750px; white-space: pre; }
.meta { display: flex; height: 46px; font-size: 34.125px; line-height: 46px; color: #616061; white-space: pre; }
.emo { width: 57.750px; height: 52px; }
.emo.gap { margin-left: 10px; }
.channel { width: 933px; border-right: 2px solid #e8e8e8; overflow: hidden; display: flex; flex-direction: column; position: relative; }
.feed { flex: none; height: 686px; overflow: hidden; }
.channel .line, .channel .meta { justify-content: flex-end; }
.cream { height: 288px; background: #fff8eb; padding-top: 17px; }
.e1 { width: 845px; } .e2 { width: 665px; } .e3 { width: 786px; }
.e4 { width: 75px; margin-top: 19px; }
.e5 { width: 701px; margin-top: 68px; }
.e6 { width: 263px; margin-top: 19px; }
.e7 { width: 815px; margin-top: 101px; }
.e8 { width: 81px; }
.e8 a { color: #1264a3; }
.datepill { position: absolute; left: -60px; top: -52px; width: 369px; height: 76px; border-radius: 38px; background: #fff; border: 2px solid #d9d4c9; box-shadow: 0 2px 4px rgba(0,0,0,.08); font-weight: 700; font-size: 34px; line-height: 72px; padding-left: 33px; white-space: nowrap; }
.composer { flex: none; border: 2px solid #dddddd; border-bottom: 0; border-radius: 21px 21px 0 0; background: #fff; overflow: hidden; }
.composer.cut { width: 881px; height: 190px; margin-left: -2px; border-top-left-radius: 0; }
.tools { height: 99px; background: #f8f8f8; display: flex; align-items: center; }
.cut .tools { padding: 8px 0 0 28px; gap: 47px; }
.tools svg { height: 32px; width: 38px; }
.thread { width: 987px; display: flex; flex-direction: column; position: relative; overflow: hidden; }
.grey { flex: none; height: 281px; overflow: hidden; background: #f8f8f8; padding-left: 157px; }
.grey .line:first-child { margin-top: -17px; }
.reply { flex: none; display: flex; padding: 10px 0 0 42px; height: 339px; }
.avatar { width: 94px; height: 94px; margin: 11px 21px 0 0; }
.reply b { font-weight: 900; }
.reply time { font-size: 31.500px; color: #616061; margin-left: 21px; }
.thread .composer { width: 904px; height: 260px; margin-left: 42px; }
.thread .tools { padding: 6px 0 0 39px; }
.tools i { width: 2.500px; height: 52px; background: #dddddd; margin-top: -6px; }
.tools .c1 { width: 26px; } .tools .c2 { width: 24px; margin-left: 59px; } .tools .c3 { width: 30px; margin-left: 55px; }
.s1 { margin-left: 38px; } .tools .c4 { width: 34px; margin-left: 35px; } .s2 { margin-left: 36px; }
.tools .c5 { width: 34px; margin-left: 34px; } .tools .c6 { width: 34px; margin-left: 51px; } .s3 { margin-left: 35px; }
.tools .c7 { width: 34px; margin-left: 35px; } .s4 { margin-left: 35px; }
.tools .c8 { margin-left: 32px; } .tools .c9 { margin-left: 46px; }
.ph { font-size: 39.375px; line-height: 58px; margin: 21px 0 0 33px; color: #8b8a8b; }
.also { display: flex; font-size: 34.125px; line-height: 46px; margin: 34px 0 0 34px; color: #616061; white-space: nowrap; }
.also i { width: 34px; height: 34px; border: 3px solid #6b6a6b; border-radius: 8px; margin: 6px 33px 0 0; }
.thumb { position: absolute; left: 957px; top: 760px; width: 21px; height: 130px; border-radius: 11px; background: #8a8a8a; }

/* taskbars */
.taskbar { flex: none; display: flex; align-items: center; color: #fff; white-space: nowrap; }
.apps { display: flex; height: 100%; }
.apps span { position: relative; display: flex; align-items: center; justify-content: center; flex: none; height: 100%; }
.apps .on { background: rgba(255,255,255,.2); }
.apps .run::after, .apps .on::after { content: ""; position: absolute; bottom: 0; left: 10%; right: 8%; height: 3px; background: #76b9ed; }
.apps .on::after { left: 0; right: 0; }
.apps .two::after { background: linear-gradient(90deg, #76b9ed 78%, #5b8fb5 78%); }
.apps em, .weather em, .notes em { position: absolute; border-radius: 50%; text-align: center; }
.apps .n { background: #2a2d28; border: 1px solid #8b8d88; font-weight: 600; }
.apps .l { background: #5c6bc0; color: #dfe3f8; }
.apps .p { position: absolute; }
.clock { display: flex; flex-direction: column; align-items: center; }

.left .taskbar { height: 60px; background: linear-gradient(90deg, #1f2820 0, #212a20 520px, #38331f 620px, #3f3b27 760px, #3f3b27); }
.left .start { width: 25px; height: 25px; margin: 0 24px 0 23px; }
.search { width: 432px; height: 60px; background: #f2f2f2; border: 2px solid #bcbcb8; color: #2b2b2b; display: flex; align-items: center; font-size: 21px; letter-spacing: -0.45px; padding: 4px 0 0 16px; }
.search svg { width: 25px; height: 25px; margin: -4px 17px 0 0; }
.left .tv { width: 25px; height: 24px; margin: 0 27px 0 23px; }
.left .apps { gap: 2px; margin-left: 1px; }
.left .apps span { width: 73px; }
.left .apps svg { width: 36px; height: 36px; }
.left .apps .n { width: 24px; height: 24px; left: 43px; top: 30px; font-size: 18px; line-height: 21px; }
.left .apps .l { width: 23px; height: 23px; left: 33px; top: 27px; font: 13px/23px Roboto, sans-serif; }
.left .apps .p { width: 23px; height: 23px; left: 34px; top: 28px; }
.weather { position: relative; display: flex; align-items: center; font-size: 20px; letter-spacing: -0.6px; width: 92px; margin-left: 134px; gap: 11px; }
.weather svg { width: 38px; height: 36px; }
.weather em { left: 19px; top: -2px; width: 18px; font-size: 14px; line-height: 22px; }
.tray { display: flex; align-items: center; margin-left: 39px; }
.r0 { width: 18px; height: 10px; } .r1 { width: 18px; height: 22px; margin-left: 19px; } .r2 { width: 26px; height: 16px; margin-left: 14px; }
.r3 { width: 26px; height: 16px; margin-left: 10px; } .r4 { width: 20px; height: 20px; margin-left: 13px; } .r5 { width: 22px; height: 20px; margin-left: 13px; }
.left .clock { width: 94px; margin-left: 17px; font-size: 17px; line-height: 28px; letter-spacing: -0.35px; }
.notes { position: relative; margin-left: 28px; width: 55px; height: 60px; border-right: 1px solid #8a8878; padding-top: 18px; }
.notes svg { width: 24px; height: 24px; }
.notes em { left: 11px; top: 30px; width: 25px; height: 25px; background: #2e2e2e; border: 1px solid #9a9a92; font-size: 18px; line-height: 22px; font-weight: 600; }

.right .taskbar { height: 40px; background: linear-gradient(90deg, #1f2820 0, #20291f 560px, #38361f 720px, #3f3e29 1000px, #403f29); }
.right .start { width: 16px; height: 16px; margin-left: 16px; }
.sm { width: 22px; height: 22px; margin-left: 29px; }
.right .tv { width: 16px; height: 16px; margin: 0 20px 0 29px; }
.right .apps { gap: 1px; }
.right .apps span { width: 48px; }
.right .apps svg { width: 24px; height: 24px; }
.right .apps span::after { height: 2px; }
.right .apps .n { width: 16px; height: 16px; left: 29px; top: 20px; font-size: 12px; line-height: 14px; }
.right .apps .l { width: 15px; height: 15px; left: 23px; top: 18px; font: 9px/15px Roboto, sans-serif; }
.right .apps .p { width: 15px; height: 15px; left: 23px; top: 19px; }
.right .clock { margin-left: auto; width: 58px; margin-right: 6px; font-size: 11.300px; line-height: 18px; letter-spacing: -0.15px; }

/* github */
.page { flex: 1; display: flex; min-height: 0; }
.github { flex: 1; color: #1f2328; }
.ghead { display: flex; align-items: center; height: 64px; background: #f6f8fa; border-bottom: 1px solid #d0d7de; padding-left: 16px; color: #656d76; }
.btn { display: flex; align-items: center; justify-content: center; height: 32px; border: 1px solid #d0d7de; border-radius: 6px; background: #f9fafb; box-shadow: 0 1px 0 rgba(31,35,40,.04); }
.btn svg { width: 16px; height: 16px; }
.btn svg.pl { width: 12px; height: 12px; stroke-width: 1.500px; }
.btn svg.ct { width: 8px; height: 4px; }
.sq { width: 32px; margin-right: 8px; }
.wide { width: 54px; margin-right: 8px; gap: 12px; }
.logo { width: 32px; height: 32px; color: #1f2328; margin-left: 8px; }
.gsearch { display: flex; align-items: center; width: 350px; height: 32px; border: 1px solid #d0d7de; border-radius: 6px; margin-left: auto; padding-left: 7px; font-size: 13.300px; letter-spacing: -0.2px; }
.gsearch svg { width: 16px; height: 16px; margin-right: 9px; }
.gsearch kbd { width: 12px; height: 16px; border: 1px solid #656d76; border-radius: 3px; margin: 0 4px; font: 11px/14px "Open Sans", sans-serif; text-align: center; }
.gsearch i { width: 1px; height: 16px; background: #d0d7de; margin-left: auto; }
.gsearch .term { margin: 0 8px 0 7px; }
.vr { width: 1px; height: 20px; background: #d0d7de; margin: 0 12px; }
.pic { width: 32px; height: 32px; margin: 0 32px 0 -1px; }

.form { width: 704px; margin-left: 920px; padding-top: 44px; display: flex; flex-direction: column; white-space: nowrap; }
.form h1 { font-size: 22.800px; line-height: 32px; font-weight: 600; letter-spacing: -0.22px; margin-bottom: 1px; }
.t { font-size: 13.300px; line-height: 21px; letter-spacing: -0.03px; }
.s { font-size: 11.400px; line-height: 18px; color: #656d76; letter-spacing: -0.03px; }
.mute { color: #656d76; }
.form a { color: #0969da; }
.sb { font-weight: 600; letter-spacing: -0.12px; }
.it { font-style: italic; margin-top: 8px; }
.form hr { width: 704px; height: 1px; border: 0; background: #d8dee4; margin: 0; }
.form .m7 { margin-top: 7px; } .form .m8 { margin-top: 8px; } .form .m15 { margin-top: 15px; } .form .m16 { margin-top: 16px; }
.own { display: flex; margin-top: 16px; height: 79px; }
.own .t { margin-bottom: 4px; }
.sel { display: flex; align-items: center; width: 121px; height: 32px; border: 1px solid #d5d8da; border-radius: 6px; background: #f6f8fa; padding-left: 11px; font-size: 13.300px; box-shadow: 0 1px 0 rgba(31,35,40,.04); }
.sel svg { width: 22px; height: 22px; }
.sel b { font-weight: 600; width: 47px; margin: 0 12px 0 7px; letter-spacing: -0.15px; }
.sel .ct { width: 8px; height: 4px; }
.slash { font-size: 22px; line-height: 32px; margin: 25px 8px 0; width: 9px; }
.inp { display: flex; align-items: center; width: 185px; height: 32px; border: 1px solid #d0d7de; border-radius: 6px; background: #fff; padding: 0 11px 0 12px; font-size: 13.300px; letter-spacing: -0.1px; }
.inp span { width: 160px; overflow: hidden; }
.ok { display: flex; align-items: center; margin-top: 4px; font-size: 11.400px; line-height: 18px; font-weight: 600; color: #1a7f37; letter-spacing: -0.05px; }
.ok svg { width: 12px; height: 12px; margin-right: 4px; }
.great { margin-top: 11px; }
.great b { font-weight: 600; color: #1a7f37; margin: 0 1px; }
.desc { margin-top: 14px; }
.desc small { font-size: 11.400px; font-weight: 400; color: #656d76; }
.full { width: 704px; margin-top: 4px; }
.vis { display: flex; height: 39px; }
.v1 { margin-top: 16px; } .v2 { margin-top: 8px; }
.vis svg { width: 24px; height: 24px; margin: 6px 8px 0 16px; }
.radio { width: 16px; height: 16px; border: 1px solid #767676; border-radius: 50%; margin-top: 13px; }
.radio.on { border: 4.500px solid #0969da; }
.g16 { margin-top: 16px; } .g9 { margin-top: 9px; } .g15 { margin-top: 15px; }
.readme { display: flex; margin-top: 4px; gap: 8px; }
.box { width: 16px; height: 16px; border: 1px solid #767676; border-radius: 3px; margin-top: 2px; }
.drop { display: flex; align-items: center; align-self: flex-start; gap: 4px; height: 28px; margin-top: 4px; border: 1px solid #d5d8da; border-radius: 6px; background: #f6f8fa; padding: 1px 8px 0; font-size: 11.400px; font-weight: 600; box-shadow: 0 1px 0 rgba(31,35,40,.04); }
.drop span { color: #656d76; }
.drop svg { width: 8px; height: 4px; margin-left: 4px; }
.info { display: flex; align-items: center; margin-top: 24px; padding-left: 4px; }
.info svg { width: 16px; height: 16px; margin-right: 4px; }
.create { align-self: flex-end; width: 136px; height: 32px; margin-top: 16px; border-radius: 6px; background: #1f883d; border: 1px solid #1c7a37; color: #fff; font-size: 13.300px; font-weight: 600; line-height: 30px; letter-spacing: -0.2px; text-align: center; }

.scroll { width: 17px; background: #f1f1f1; display: flex; flex-direction: column; align-items: center; }
.up, .down { width: 0; height: 0; border: 4px solid transparent; }
.up { border-bottom-color: #8b8b8b; border-top: 0; margin: 7px 0 6px; }
.bar { width: 13px; height: 1121px; background: #c1c1c1; }
.down { border-top-color: #505050; border-bottom: 0; margin: auto 0 7px; }
```
